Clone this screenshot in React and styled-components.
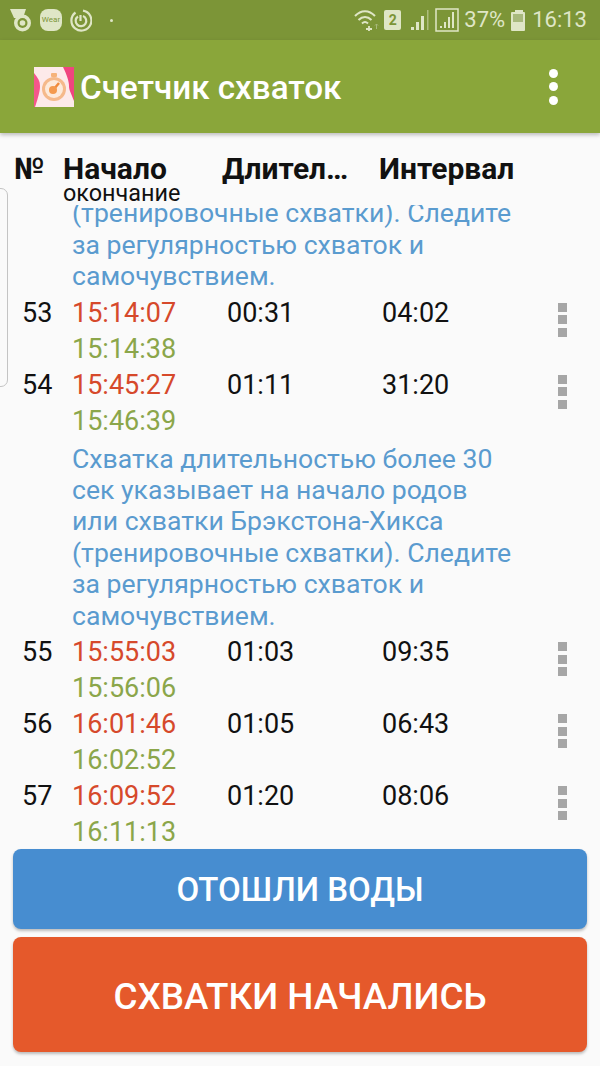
import styled, { createGlobalStyle } from "styled-components";

const GlobalStyle = createGlobalStyle`
  html, body {
    margin: 0;
    padding: 0;
    background: #fafafa;
  }
  * {
    box-sizing: border-box;
  }
`;

const NOTE =
  "Схватка длительностью более 30\nсек указывает на начало родов\nили схватки Брэкстона-Хикса\n(тренировочные схватки). Следите\nза регулярностью схваток и\nсамочувствием.";

const rows = [
  { id: 52, start: "15:10:05", end: "15:10:36", length: "00:31", gap: "03:58", note: true },
  { id: 53, start: "15:14:07", end: "15:14:38", length: "00:31", gap: "04:02", note: false },
  { id: 54, start: "15:45:27", end: "15:46:39", length: "01:11", gap: "31:20", note: true },
  { id: 55, start: "15:55:03", end: "15:56:06", length: "01:03", gap: "09:35", note: false },
  { id: 56, start: "16:01:46", end: "16:02:52", length: "01:05", gap: "06:43", note: false },
  { id: 57, start: "16:09:52", end: "16:11:13", length: "01:20", gap: "08:06", note: false },
];

function StatusIcons() {
  return (
    <StatusLeft>
      <svg width="22" height="23" viewBox="0 0 22 23">
        <path d="M0 0h16l-3 9H4z" fill="#dfe6c6" />
        <circle cx="12.500" cy="14" r="8.500" fill="#dfe6c6" />
        <circle cx="12.500" cy="14" r="5" fill="#7c9537" />
        <circle cx="12.500" cy="14" r="2.800" fill="#dfe6c6" />
      </svg>
      <WearBadge>Wear</WearBadge>
      <svg width="22" height="23" viewBox="0 0 22 23" fill="none" stroke="#dfe6c6" strokeWidth="2.200">
        <path d="M13 1.700a10 10 0 1 1-7.500 1.800" />
        <path d="M13 7a5.300 5.300 0 1 1-5 .5" />
        <path d="M10.500 6v6" />
      </svg>
      <Dot />
    </StatusLeft>
  );
}

function StatusRight() {
  return (
    <StatusRightWrap>
      <svg width="25" height="22" viewBox="0 0 25 22" fill="none" stroke="#dfe6c6" strokeWidth="2">
        <path d="M1 7c6-6.500 14-6.500 20 0" />
        <path d="M4.500 11c4-4 9-4 13 0" />
        <path d="M8 14.500c2-2 4-2 6 0" />
        <path d="M12 20h6M15 17v6" strokeWidth="1.800" />
        <path d="M22.500 20v-5M21 16.500l1.500-1.500 1.500 1.500" strokeWidth="1" stroke="#a8b97c" />
      </svg>
      <SimBadge>2</SimBadge>
      <svg width="24" height="22" viewBox="0 0 24 22" fill="#dfe6c6">
        <rect x="5" y="18" width="3" height="3" />
        <rect x="10" y="13" width="3" height="8" />
        <rect x="15" y="7" width="3" height="14" />
        <rect x="21" y="1" width="1.500" height="20" opacity="0.5" />
      </svg>
      <svg width="24" height="24" viewBox="0 0 24 24" fill="#dfe6c6">
        <path d="M1 1h22v22H1z" fill="none" stroke="#dfe6c6" strokeWidth="1.500" />
        <rect x="5" y="18" width="2" height="2" />
        <rect x="9" y="14" width="2" height="6" />
        <rect x="13" y="9" width="2" height="11" />
        <rect x="17" y="4" width="2" height="16" />
      </svg>
      <StatusText>37%</StatusText>
      <svg width="17" height="23" viewBox="0 0 17 23">
        <rect x="5" y="1" width="8" height="3" fill="#dfe6c6" />
        <rect x="1" y="3" width="14" height="19" rx="1" fill="#dfe6c6" />
        <rect x="3" y="5" width="10" height="8" fill="#a8b97c" />
      </svg>
      <StatusText>16:13</StatusText>
    </StatusRightWrap>
  );
}

function AppLogo() {
  return (
    <svg width="40" height="40" viewBox="0 0 40 40">
      <rect width="40" height="40" fill="#fdeaea" />
      <path d="M0 6c4 5 6 8 6 13s-2 12-5 21H0z" fill="#f4578c" />
      <path d="M29 0h11v34c-3-8-5-11-5-15s-2-11-6-19z" fill="#f0457f" />
      <rect x="17" y="6" width="6" height="4" rx="1" fill="#f6b27a" />
      <circle cx="20" cy="22" r="12" fill="#f5b98b" />
      <circle cx="20" cy="22" r="9" fill="#fdeadb" />
      <path d="M20 22l5-6" stroke="#f08a3c" strokeWidth="2.500" />
      <circle cx="19" cy="23" r="4" fill="#f49a4e" />
    </svg>
  );
}

export default function App() {
  return (
    <Screen>
      <GlobalStyle />
      <StatusBar>
        <StatusIcons />
        <StatusRight />
      </StatusBar>
      <Toolbar>
        <AppLogo />
        <Title>Счетчик схваток</Title>
        <MenuDots>
          <i />
          <i />
          <i />
        </MenuDots>
      </Toolbar>
      <TableHeader>
        <HeadCell>№</HeadCell>
        <StartHead>
          <HeadCell>Начало</HeadCell>
          <SubHead>окончание</SubHead>
        </StartHead>
        <HeadCell>Длител…</HeadCell>
        <HeadCell>Интервал</HeadCell>
      </TableHeader>
      <List>
        {rows.map((row) => (
          <div key={row.id}>
            <Row>
              <Cell>{row.id}</Cell>
              <div>
                <Cell $color="#d6492b">{row.start}</Cell>
                <Cell $color="#8ba64a">{row.end}</Cell>
              </div>
              <Cell>{row.length}</Cell>
              <Cell>{row.gap}</Cell>
              <RowMenu>
                <i />
                <i />
                <i />
              </RowMenu>
            </Row>
            {row.note && <Note>{NOTE}</Note>}
          </div>
        ))}
      </List>
      <EdgeHandle />
      <Buttons>
        <ActionButton $color="#478dd0" $height={80} $size={33}>
          ОТОШЛИ ВОДЫ
        </ActionButton>
        <ActionButton $color="#e5592b" $height={115} $size={36.8} $drop={3}>
          СХВАТКИ НАЧАЛИСЬ
        </ActionButton>
      </Buttons>
    </Screen>
  );
}

const Screen = styled.div`
  position: relative;
  width: 600px;
  height: 1066px;
  overflow: hidden;
  display: flex;
  flex-direction: column;
  background: #fafafa;
  font-family: Roboto, "Noto Sans", sans-serif;
`;

const StatusBar = styled.div`
  height: 40px;
  flex: none;
  display: flex;
  align-items: center;
  justify-content: space-between;
  padding: 0 13px 0 10px;
  background: #7c9537;
`;

const StatusLeft = styled.div`
  display: flex;
  align-items: center;
  gap: 8px;
`;

const WearBadge = styled.div`
  width: 22px;
  height: 22px;
  border-radius: 8px;
  background: #dfe6c6;
  color: #7c9537;
  font-size: 8px;
  line-height: 22px;
  text-align: center;
`;

const Dot = styled.div`
  width: 3px;
  height: 3px;
  margin-left: 10px;
  border-radius: 50%;
  background: #dfe6c6;
`;

const StatusRightWrap = styled.div`
  display: flex;
  align-items: center;
  gap: 5px;
`;

const SimBadge = styled.div`
  width: 17px;
  height: 20px;
  border-radius: 2px;
  background: #dfe6c6;
  color: #7c9537;
  font-size: 14px;
  font-weight: 700;
  line-height: 20px;
  text-align: center;
`;

const StatusText = styled.span`
  color: #dfe6c6;
  font-size: 22px;
  line-height: 40px;
`;

const Toolbar = styled.div`
  position: relative;
  z-index: 2;
  height: 93px;
  flex: none;
  display: flex;
  align-items: center;
  padding: 0 42px 0 34px;
  background: #8aa63a;
  box-shadow: 0 2px 4px rgba(0, 0, 0, 0.25);
`;

const Title = styled.div`
  flex: 1;
  margin-left: 6px;
  padding-top: 2px;
  color: #fff;
  font-size: 33.2px;
  font-weight: 500;
`;

const MenuDots = styled.div`
  display: flex;
  flex-direction: column;
  gap: 4.5px;

  i {
    display: block;
    width: 9px;
    height: 9px;
    border-radius: 50%;
    background: #fff;
  }
`;

const TableHeader = styled.div`
  flex: none;
  height: 72px;
  display: grid;
  grid-template-columns: 49px 159px 157px 1fr;
  padding: 20px 0 0 14px;
  background: #fafafa;
`;

const StartHead = styled.div`
  display: flex;
  flex-direction: column;
`;

const HeadCell = styled.div`
  color: #111;
  font-size: 30px;
  font-weight: 700;
  line-height: 32px;
  white-space: nowrap;
`;

const SubHead = styled.div`
  margin-top: -3px;
  color: #111;
  font-size: 23.4px;
  line-height: 22px;
`;

const List = styled.div`
  flex: 1;
  min-height: 0;
  display: flex;
  flex-direction: column;
  justify-content: flex-end;
  overflow: hidden;
`;

const Row = styled.div`
  height: 72px;
  display: grid;
  grid-template-columns: 50px 155px 155px 1fr 42px;
  grid-template-rows: 71px;
  padding: 1px 0 0 22px;
`;

const Cell = styled.div`
  color: ${(props) => props.$color || "#111"};
  font-size: 27px;
  line-height: 36px;
`;

const RowMenu = styled.div`
  display: flex;
  flex-direction: column;
  gap: 3.500px;
  padding-top: 8px;

  i {
    display: block;
    width: 9px;
    height: 9px;
    background: #a6a6a6;
  }
`;

const Note = styled.div`
  padding: 5px 0 2px 72px;
  color: #5a9bcf;
  font-size: 26.6px;
  line-height: 31.4px;
  white-space: pre-line;
`;

const EdgeHandle = styled.div`
  position: absolute;
  top: 188px;
  left: -8px;
  width: 16px;
  height: 199px;
  border: 1px solid #c4c4c4;
  border-radius: 7px;
`;

const Buttons = styled.div`
  flex: none;
  display: flex;
  flex-direction: column;
  gap: 8px;
  padding: 0 13px 14px;
`;

const ActionButton = styled.button`
  height: ${(props) => props.$height}px;
  padding: ${(props) => props.$drop || 0}px 0 0;
  border: none;
  border-radius: 8px;
  background: ${(props) => props.$color};
  color: #fff;
  font-family: inherit;
  font-size: ${(props) => props.$size}px;
  font-weight: 500;
  box-shadow: 0 2px 3px rgba(0, 0, 0, 0.25);
`;
